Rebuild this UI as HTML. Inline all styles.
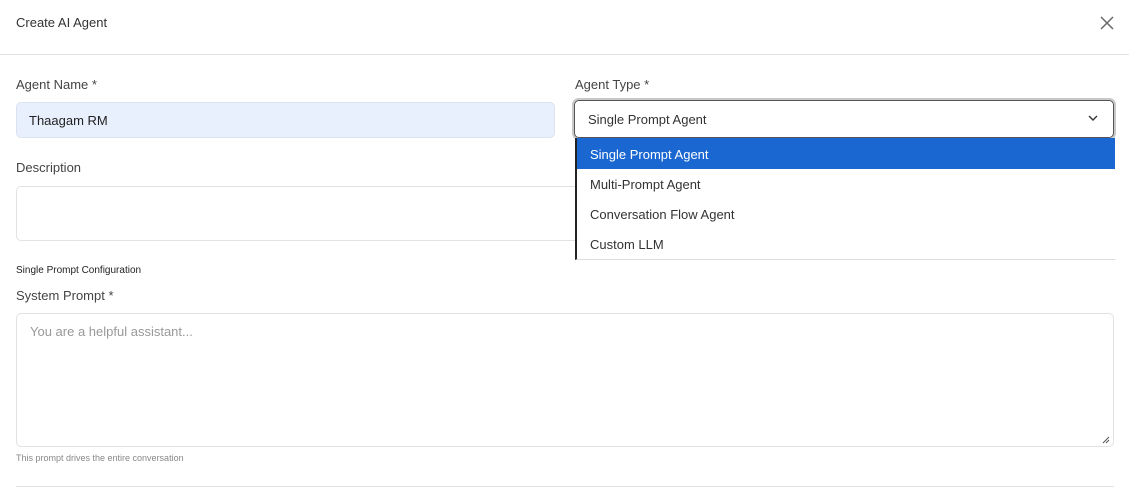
<!DOCTYPE html>
<html><head><meta charset="utf-8"><style>
*{box-sizing:border-box;margin:0;padding:0}
body{width:1129px;height:488px;background:#fff;font-family:"Liberation Sans",sans-serif;color:#333;position:relative;overflow:hidden}
.a{position:absolute}
.lbl{font-size:13px;color:#444}
</style></head><body>
<div class="a" style="left:16px;top:15px;font-size:13px;color:#333">Create AI Agent</div>
<svg class="a" style="left:1100px;top:16px" width="14" height="14" viewBox="0 0 14 14"><path d="M1 1L13 13M13 1L1 13" stroke="#666" stroke-width="1.5"/></svg>
<div class="a" style="left:0;top:54px;width:1129px;height:1px;background:#e3e3e3"></div>
<div class="a lbl" style="left:16px;top:77px">Agent Name *</div>
<div class="a" style="left:16px;top:102px;width:539px;height:36px;background:#e8f0fe;border:1px solid #dde3ee;border-radius:5px;font-size:13px;color:#222;padding:10px 12px">Thaagam RM</div>
<div class="a lbl" style="left:575px;top:77px">Agent Type *</div>
<div class="a" style="left:574px;top:100px;width:540px;height:38px;border:1px solid #555;box-shadow:0 0 0 2px #c8c8c8;border-radius:5px;font-size:13px;color:#333;padding:11px 13px">Single Prompt Agent</div>
<svg class="a" style="left:1088px;top:115px" width="10" height="7" viewBox="0 0 10 7"><path d="M1 1L5 5L9 1" stroke="#333" stroke-width="1.4" fill="none"/></svg>
<div class="a lbl" style="left:16px;top:160px">Description</div>
<div class="a" style="left:16px;top:186px;width:1098px;height:55px;border:1px solid #e2e2e2;border-radius:5px"></div>
<div class="a" style="left:575px;top:138px;width:540px;height:122px;background:#fff;border-left:2px solid #222;border-bottom:1px solid #ddd;font-size:13px;color:#333">
<div style="height:31px;background:#1a67d2;color:#fff;padding:9px 13px">Single Prompt Agent</div>
<div style="height:30px;padding:8px 13px">Multi-Prompt Agent</div>
<div style="height:30px;padding:8px 13px">Conversation Flow Agent</div>
<div style="height:30px;padding:8px 13px">Custom LLM</div>
</div>
<div class="a" style="left:16px;top:265px;font-size:10px;color:#222">Single Prompt Configuration</div>
<div class="a lbl" style="left:16px;top:288px">System Prompt *</div>
<div class="a" style="left:16px;top:313px;width:1098px;height:134px;border:1px solid #e2e2e2;border-radius:5px;font-size:13px;color:#999;padding:10px 13px">You are a helpful assistant...</div>
<svg class="a" style="left:1102px;top:436px" width="8" height="8" viewBox="0 0 8 8"><path d="M7 1L1 7M7 4L4 7" stroke="#555" stroke-width="1"/></svg>
<div class="a" style="left:16px;top:453px;font-size:9px;color:#888">This prompt drives the entire conversation</div>
<div class="a" style="left:16px;top:486px;width:1098px;height:1px;background:#e3e3e3"></div>
</body></html>
